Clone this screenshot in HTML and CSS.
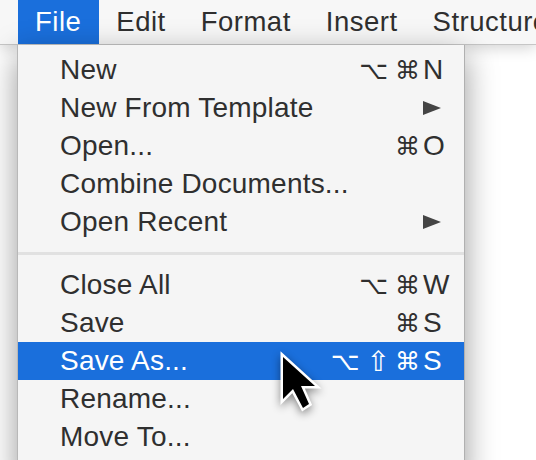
FILE: index.html
```html
<!DOCTYPE html>
<html>
<head>
<meta charset="utf-8">
<link rel="stylesheet" href="styles.css">
</head>
<body>
<div class="menubar">
  <div class="mb-item active">File</div>
  <div class="mb-item">Edit</div>
  <div class="mb-item">Format</div>
  <div class="mb-item">Insert</div>
  <div class="mb-item">Structure</div>
</div>
<div class="menu">
  <div class="row"><span class="label">New</span><span class="mods"><span class="m gap">⌥</span><span class="m">⌘</span></span><span class="key">N</span></div>
  <div class="row"><span class="label">New From Template</span><span class="mods"></span><span class="key"><span class="tri"></span></span></div>
  <div class="row"><span class="label">Open...</span><span class="mods"><span class="m">⌘</span></span><span class="key">O</span></div>
  <div class="row"><span class="label">Combine Documents...</span><span class="mods"></span><span class="key"></span></div>
  <div class="row"><span class="label">Open Recent</span><span class="mods"></span><span class="key"><span class="tri"></span></span></div>
  <div class="sep"></div>
  <div class="row"><span class="label">Close All</span><span class="mods"><span class="m gap">⌥</span><span class="m">⌘</span></span><span class="key">W</span></div>
  <div class="row"><span class="label">Save</span><span class="mods"><span class="m">⌘</span></span><span class="key">S</span></div>
  <div class="row sel"><span class="label">Save As...</span><span class="mods"><span class="m gap">⌥</span><span class="m gap2 shift">⇧</span><span class="m">⌘</span></span><span class="key">S</span></div>
  <div class="row"><span class="label">Rename...</span><span class="mods"></span><span class="key"></span></div>
  <div class="row"><span class="label">Move To...</span><span class="mods"></span><span class="key"></span></div>
</div>
<svg class="cursor" width="46" height="68" viewBox="0 0 46 68">
  <path d="M7 7 L7 49 L17 39 L27 58 L33 54 L25 36 L39 36 Z" fill="#000" stroke="#fff" stroke-width="5" stroke-linejoin="miter" paint-order="stroke"/>
</svg>
</body>
</html>
```
FILE: styles.css
```css
html, body {
  margin: 0;
  padding: 0;
}
body {
  width: 536px;
  height: 460px;
  overflow: hidden;
  background: #ffffff;
  font-family: "Liberation Sans", Arial, sans-serif;
  position: relative;
}
.menubar {
  height: 44px;
  border-bottom: 1px solid #c6c6c6;
  background: #f7f7f7;
  display: flex;
  padding-left: 18px;
  box-shadow: 0 2px 16px rgba(0,0,0,0.2);
  position: relative;
  z-index: 1;
  white-space: nowrap;
}
.mb-item {
  padding: 0 18px 0 17px;
  line-height: 44px;
  font-size: 27.5px;
  letter-spacing: 0.5px;
  color: #2f2f2f;
}
.mb-item.active {
  background: #1a6fdc;
  color: #fff;
}
.menu {
  position: absolute;
  left: 17px;
  top: 45px;
  width: 446px;
  height: 430px;
  background: #f5f5f5;
  border-left: 1px solid #b8b8b8;
  border-right: 1px solid #b0b0b0;
  padding-top: 6px;
  box-shadow: 0 10px 30px rgba(0,0,0,0.4);
  z-index: 2;
}
.row {
  height: 38px;
  display: grid;
  grid-template-columns: 1fr auto 30px;
  align-items: center;
  padding-left: 42px;
  padding-right: 11px;
  font-size: 28px;
  letter-spacing: 0.2px;
  color: #2f2f2f;
  white-space: nowrap;
}
.row.sel {
  background: #1a6fdc;
  color: #fff;
}
.mods {
  display: flex;
  align-items: center;
  justify-content: flex-end;
  font-family: "DejaVu Sans", sans-serif;
  font-size: 25px;
  letter-spacing: 0;
  padding-right: 3px;
}
.m.gap {
  margin-right: 7px;
}
.m.gap2 {
  margin-right: 5px;
}
.m.shift {
  font-size: 28px;
}
.key {
  display: flex;
  align-items: center;
}
.tri {
  width: 0;
  height: 0;
  border-left: 18px solid #444;
  border-top: 7.5px solid transparent;
  border-bottom: 7.5px solid transparent;
}
.sep {
  height: 3px;
  background: #e1e1e1;
  margin: 11px 0;
}
.cursor {
  position: absolute;
  left: 276px;
  top: 350px;
  z-index: 3;
  filter: drop-shadow(0 3px 4px rgba(0,0,0,0.45));
}
```
